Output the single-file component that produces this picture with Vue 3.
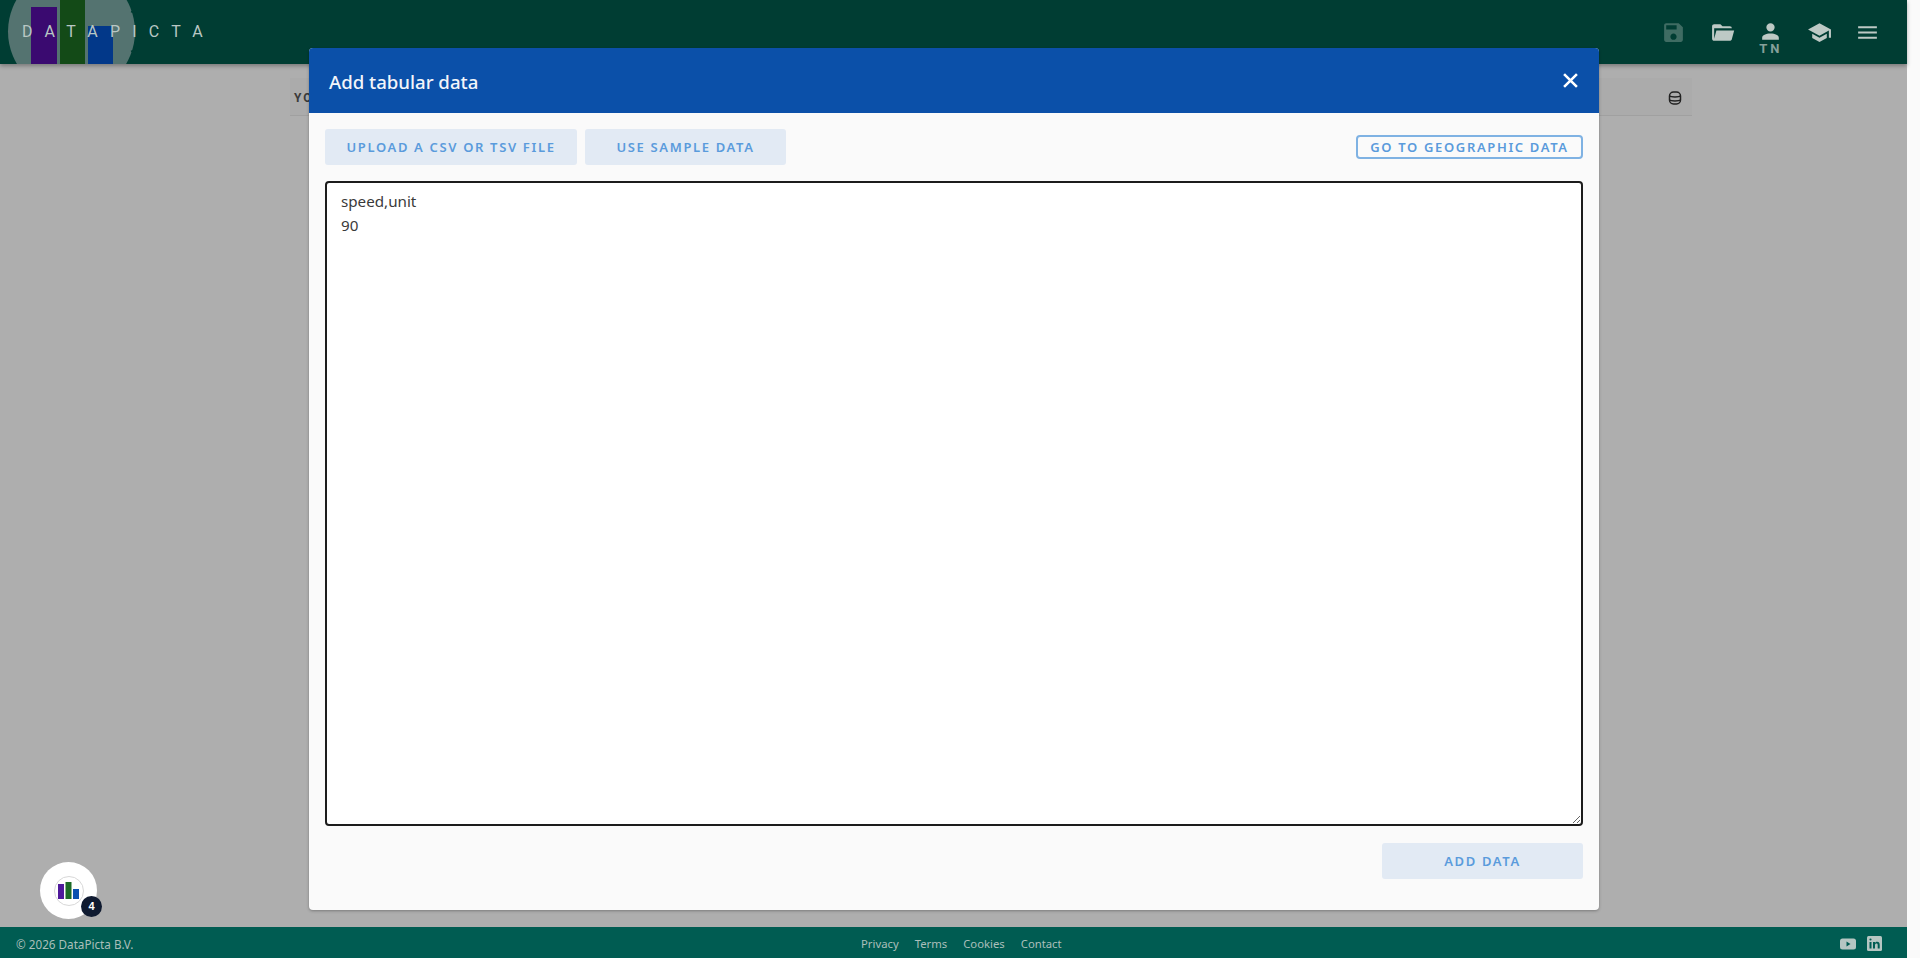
<script setup>
const tools = [
  { id: 'save', d: 'M17 3H5c-1.11 0-2 .9-2 2v14c0 1.1.89 2 2 2h14c1.1 0 2-.9 2-2V7l-4-4zm-5 16c-1.66 0-3-1.34-3-3s1.34-3 3-3 3 1.34 3 3-1.34 3-3 3zm3-10H5V5h10v4z', off: true },
  { id: 'open', d: 'M19 20H4c-1.11 0-2-.9-2-2V6c0-1.11.89-2 2-2h6l2 2h7a2 2 0 0 1 2 2H4v10l2.14-8h17.07l-2.28 8.5c-.23.87-1.01 1.5-1.93 1.5z' },
  { id: 'user', d: 'M12 4a4 4 0 0 1 4 4 4 4 0 0 1-4 4 4 4 0 0 1-4-4 4 4 0 0 1 4-4m0 10c4.42 0 8 1.79 8 4v2H4v-2c0-2.21 3.58-4 8-4z', badge: 'TN' },
  { id: 'school', d: 'M12 3 1 9l11 6 9-4.91V17h2V9M5 13.18v4L12 21l7-3.82v-4L12 17l-7-3.82z' },
  { id: 'menu', d: 'M3 18h18v-2H3v2zm0-5h18v-2H3v2zm0-7v2h18V6H3z' }
]
const links = ['Privacy', 'Terms', 'Cookies', 'Contact']
const csv = 'speed,unit\n90'
</script>

<template>
  <div class="page">
    <div class="main">
      <header class="top">
        <div class="logo">
          <svg class="logo-art" width="140" height="64" viewBox="0 0 140 64">
            <circle cx="71.500" cy="31.500" r="63.500" fill="#547370" />
            <rect x="31" y="7" width="26" height="57" fill="#3a0a70" />
            <rect x="60" y="0" width="25" height="64" fill="#134a17" />
            <rect x="88" y="26" width="25" height="38" fill="#023889" />
            <path d="M131 11.500l5 2M136 49.500l-5 2" stroke="#003d33" stroke-width="1.500" fill="none" />
          </svg>
          <span class="logo-text">DATAPICTA</span>
        </div>
        <nav class="tools">
          <button v-for="t in tools" :key="t.id" class="tool" :class="{ off: t.off, badged: t.badge }" type="button">
            <svg viewBox="0 0 24 24" width="25" height="25"><path :d="t.d" fill="currentColor" /></svg>
            <span v-if="t.badge" class="badge-text">{{ t.badge }}</span>
          </button>
        </nav>
      </header>

      <section class="content">
        <div class="table-head">
          <span class="table-title">YO</span>
          <svg class="db" viewBox="0 0 14 14" width="14" height="14" fill="none" stroke="#222" stroke-width="1.500">
            <rect x="1.500" y="1" width="11" height="12" rx="4" />
            <path d="M1.500 5c1.500 1.200 9.500 1.200 11 0M1.500 9c1.500 1.200 9.500 1.200 11 0" />
          </svg>
        </div>
      </section>

      <footer class="foot">
        <span class="copy">© 2026 DataPicta B.V.</span>
        <div class="links"><a v-for="l in links" :key="l">{{ l }}</a></div>
        <div class="social">
          <svg viewBox="0 0 16 12" width="16" height="12"><rect width="16" height="11" y=".5" rx="2.500" fill="#b5c6c2" /><path d="M6.500 3.500 10.500 6l-4 2.500z" fill="#005c52" /></svg>
          <svg viewBox="0 0 15 15" width="15" height="15"><rect width="15" height="15" rx="1.500" fill="#b5c6c2" /><path d="M2.500 6h2v6.500h-2zM2.400 3.500a1.100 1.100 0 1 1 2.200 0 1.100 1.100 0 0 1-2.200 0zM6 6h2v1c.4-.7 1.200-1.200 2.200-1.200 1.700 0 2.500 1 2.500 2.900v3.800h-2V9.100c0-1-.3-1.600-1.200-1.600S8 8.200 8 9.200v3.300H6z" fill="#005c52" /></svg>
        </div>
      </footer>

      <button class="fab" type="button">
        <span class="fab-ring">
          <svg viewBox="0 0 22 17" width="22" height="17">
            <rect x="0" y="2" width="6" height="15" fill="#4f1a9b" />
            <rect x="7.500" y="0" width="6" height="17" fill="#1c6b26" />
            <rect x="15" y="7" width="6" height="10" fill="#0b50b0" />
          </svg>
        </span>
        <span class="fab-count">4</span>
      </button>
    </div>
    <div class="gutter"></div>

    <div class="dialog" role="dialog">
      <div class="dialog-head">
        <h2>Add tabular data</h2>
        <svg class="close" viewBox="0 0 14 14" width="15" height="15"><path d="M1 1l12 12M13 1 1 13" stroke="#fff" stroke-width="2.400" fill="none" /></svg>
      </div>
      <div class="dialog-body">
        <div class="toolbar">
          <button class="btn wide" type="button">UPLOAD A CSV OR TSV FILE</button>
          <button class="btn sample" type="button">USE SAMPLE DATA</button>
          <button class="btn-outline" type="button">GO TO GEOGRAPHIC DATA</button>
        </div>
        <textarea class="input" :value="csv" spellcheck="false"></textarea>
        <div class="actions">
          <button class="btn add" type="button">ADD DATA</button>
        </div>
      </div>
    </div>
  </div>
</template>

<style>
html, body { margin: 0; height: 100%; overflow: hidden; }
</style>

<style scoped>
.page {
  position: relative;
  display: flex;
  width: 100%;
  height: 958px;
  overflow: hidden;
  font-family: "Noto Sans", "Open Sans", sans-serif;
}
.main {
  position: relative;
  flex: 1;
  display: flex;
  flex-direction: column;
  background: #aeaeae;
}
.gutter { width: 13px; background: #fafafa; }

.top {
  position: relative;
  z-index: 1;
  flex: none;
  height: 64px;
  display: flex;
  align-items: center;
  justify-content: space-between;
  background: #003d33;
  box-shadow: 0 2px 4px rgba(0, 0, 0, .3);
}
.logo { position: relative; width: 140px; height: 64px; flex: none; }
.logo-art { display: block; overflow: hidden; }
.logo-text {
  position: absolute;
  left: 22px;
  top: 21px;
  font-family: Roboto, sans-serif;
  font-weight: 400;
  font-size: 16px;
  line-height: 22px;
  letter-spacing: 12.200px;
  color: #b9c7c4;
  white-space: nowrap;
}
.tools { display: flex; padding-right: 15px; }
.tool {
  position: relative;
  width: 48.500px;
  height: 64px;
  padding: 0;
  border: 0;
  background: none;
  color: #bdc9c5;
  display: flex;
  align-items: center;
  justify-content: center;
}
.tool.off { color: #3f6c63; }
.tool.badged svg { margin-top: -1px; }
.badge-text {
  position: absolute;
  left: 0;
  right: 0;
  top: 41px;
  text-align: center;
  font-family: Roboto, sans-serif;
  font-size: 13px;
  line-height: 15px;
  font-weight: 700;
  letter-spacing: 3px;
  color: #86a09a;
}

.content { flex: 1; padding: 14px 215px 0 290px; }
.table-head {
  height: 37px;
  box-sizing: content-box;
  display: flex;
  align-items: center;
  justify-content: space-between;
  padding: 0 10px 0 4px;
  background: #ababab;
  border-bottom: 1px solid #a0a0a0;
}
.table-title {
  margin-top: 2px;
  font-family: Roboto, sans-serif;
  font-size: 12px;
  font-weight: 700;
  letter-spacing: 2px;
  color: #3a3a3a;
}
.db { display: block; margin-top: 3px; }

.foot {
  position: relative;
  flex: none;
  height: 31px;
  display: flex;
  align-items: center;
  justify-content: space-between;
  padding: 2px 25px 0 16px;
  box-sizing: border-box;
  background: #005c52;
  font-size: 11.700px;
  color: #aabfba;
}
.links { position: absolute; left: 861px; top: 2px; height: 29px; display: flex; align-items: center; gap: 16px; font-size: 11.300px; }
.social { display: flex; align-items: center; gap: 11px; }
.social svg { display: block; }

.fab {
  position: absolute;
  left: 40px;
  top: 862px;
  width: 57px;
  height: 57px;
  padding: 0;
  border: 0;
  border-radius: 50%;
  background: #fff;
  display: flex;
  align-items: center;
  justify-content: center;
}
.fab-ring {
  width: 30px;
  height: 30px;
  box-sizing: border-box;
  border: 1px solid #d8d8d8;
  border-radius: 50%;
  display: flex;
  align-items: center;
  justify-content: center;
}
.fab-ring svg { display: block; }
.fab-count {
  position: absolute;
  left: 41px;
  top: 34px;
  width: 21px;
  height: 21px;
  border-radius: 50%;
  background: #0f1a30;
  color: #fff;
  font-size: 11px;
  font-weight: 700;
  line-height: 21px;
  text-align: center;
}

.dialog {
  position: absolute;
  z-index: 2;
  left: 309px;
  top: 48px;
  width: 1290px;
  height: 862px;
  display: flex;
  flex-direction: column;
  border-radius: 4px;
  overflow: hidden;
  background: #fafafa;
  box-shadow: 0 1px 3px rgba(0, 0, 0, .3);
}
.dialog-head {
  flex: none;
  height: 65px;
  display: flex;
  align-items: center;
  justify-content: space-between;
  padding: 2px 21px 0 20px;
  box-sizing: border-box;
  background: #0b50a9;
  color: #f2f5fa;
}
.dialog-head h2 { margin: 0; font-size: 18.600px; font-weight: 500; line-height: 26px; }
.close { display: block; margin-top: -2px; }
.dialog-body {
  flex: 1;
  display: flex;
  flex-direction: column;
  padding: 16px 16px 31px;
  min-height: 0;
}
.toolbar { flex: none; height: 36px; display: flex; align-items: center; gap: 8px; }
.btn {
  height: 36px;
  padding: 0;
  border: 0;
  border-radius: 3px;
  background: #e2eaf4;
  color: #5a9bdc;
  font-family: inherit;
  font-size: 13px;
  font-weight: 600;
  letter-spacing: 1.650px;
}
.wide { width: 252px; }
.sample { width: 201px; }
.btn-outline {
  margin-left: auto;
  width: 227px;
  height: 24px;
  padding: 0;
  box-sizing: border-box;
  border: 2px solid #7fb2e3;
  border-radius: 4px;
  background: #fafafa;
  color: #5a9bdc;
  font-family: inherit;
  font-size: 13px;
  font-weight: 600;
  letter-spacing: 1.650px;
}
.input {
  flex: none;
  height: 645px;
  margin-top: 16px;
  box-sizing: border-box;
  padding: 6px 14px;
  border: 2px solid #1c1c1c;
  border-radius: 4px;
  outline: none;
  background: #fff;
  color: #3a3a3a;
  font-family: inherit;
  font-size: 15.200px;
  line-height: 24px;
  resize: vertical;
}
.actions { flex: none; margin-top: 17px; display: flex; justify-content: flex-end; }
.add { width: 201px; }
</style>
